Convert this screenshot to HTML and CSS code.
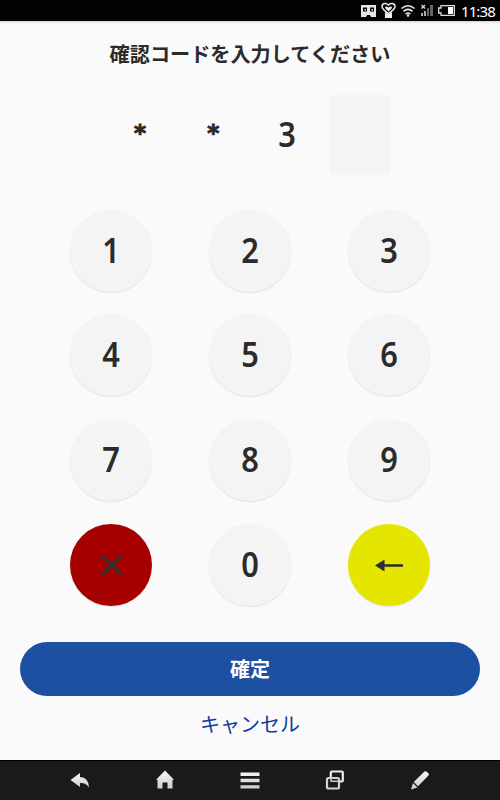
FILE: index.html
```html
<!DOCTYPE html>
<html lang="ja">
<head>
<meta charset="utf-8">
<title>確認コード</title>
<link rel="stylesheet" href="styles.css">
</head>
<body>
<div class="screen">
  <header class="status">
    <svg class="status-icons" width="98" height="21" viewBox="0 0 98 21">
      <path fill="#e6e6e6" fill-rule="evenodd" d="M1 5H16V17H11L10 15H7L6 17H1ZM3 7.500V11.500H7V7.500ZM10 7.500V11.500H14V7.500ZM4.500 9H6V10.500H4.500ZM11.500 9H13V10.500H11.500Z"/>
      <path fill="none" stroke="#eee" stroke-width="1.500" d="M28.500 13.500C24 10.500 22 8.500 22 6.500C22 3 26.500 2.500 28.500 5C30.500 2.500 35 3 35 6.500C35 8.500 33 10.500 28.500 13.500Z"/>
      <path fill="#eee" d="M28.500 11.500L25 8Q25 5.500 28.500 7.500Q32 5.500 32 8ZM25 12L28.500 14L32 12V18H25Z"/>
      <path fill="none" stroke="#e6e6e6" stroke-width="1.600" d="M41.500 8.500Q48 3 54.500 8.500M43.500 11.300Q48 7.500 52.500 11.300M45.500 14Q48 12 50.500 14"/>
      <circle cx="48" cy="15.500" r="1.300" fill="#eee"/>
      <path stroke="#ddd" stroke-width="1.300" d="M61.500 5L65 8.500M65 5L61.500 8.500"/>
      <path fill="#aaa" d="M61 13H63V16H61ZM64 11H66V16H64Z"/>
      <path fill="#666" d="M67 8H69V16H67ZM70 5H73V16H70Z"/>
      <path fill="none" stroke="#ddd" stroke-width="1.300" d="M81 5.700H94.300V15.300H81V13H78.700V8H81Z"/>
      <path fill="#fff" d="M88 7H93V14H88Z"/>
    </svg>
    <span class="clock">11:38</span>
  </header>
  <main class="content">
    <h1 class="title">確認コードを入力してください</h1>
    <div class="code">
      <div class="cell star">*</div>
      <div class="cell star">*</div>
      <div class="cell"><span class="digit">3</span></div>
      <div class="cell empty"></div>
    </div>
    <div class="keypad">
      <button class="key"><span class="digit">1</span></button>
      <button class="key"><span class="digit">2</span></button>
      <button class="key"><span class="digit">3</span></button>
      <button class="key"><span class="digit">4</span></button>
      <button class="key"><span class="digit">5</span></button>
      <button class="key"><span class="digit">6</span></button>
      <button class="key"><span class="digit">7</span></button>
      <button class="key"><span class="digit">8</span></button>
      <button class="key"><span class="digit">9</span></button>
      <button class="key clear" aria-label="クリア">
        <svg width="30" height="30" viewBox="0 0 30 30"><path stroke="#333" stroke-width="3.200" d="M6.200 6.200L25.300 24.600M25.300 6.200L6.200 24.600"/></svg>
      </button>
      <button class="key"><span class="digit">0</span></button>
      <button class="key back" aria-label="戻る">
        <svg width="30" height="30" viewBox="0 0 30 30"><path fill="#2d2d32" d="M1 15.500L10.500 9.500V14.200H29V16.800H10.500V21.500Z"/></svg>
      </button>
    </div>
    <button class="confirm">確定</button>
    <a class="cancel">キャンセル</a>
  </main>
  <nav class="navbar">
    <svg width="24" height="24" viewBox="0 0 24 24"><path fill="url(#metal)" d="M2.500 11L12 4V8Q20.500 8 21 18.500Q18 13.500 12 14V18Z"/></svg>
    <svg width="24" height="24" viewBox="0 0 24 24"><path fill="url(#metal)" d="M12 1.500L21 10.800H19.500V19.500H14.500V13.500H9.500V19.500H4.500V10.800H3Z"/></svg>
    <svg width="24" height="24" viewBox="0 0 24 24"><path fill="url(#metal)" d="M2.500 3.500H21.500V7H2.500ZM2.500 9.800H21.500V13.200H2.500ZM2.500 16.200H21.500V19.500H2.500Z"/></svg>
    <svg width="24" height="24" viewBox="0 0 24 24"><rect x="7.800" y="2.500" width="12" height="10" rx="1" fill="none" stroke="#eee" stroke-width="2.200"/><rect x="4" y="9" width="12" height="10.500" rx="1.500" fill="#1a1a1a" stroke="#d2d2d2" stroke-width="2.200"/><path fill="none" stroke="#ccc" stroke-width="1.500" d="M8 8V12.200H15"/></svg>
    <svg width="24" height="24" viewBox="0 0 24 24"><path fill="url(#metal)" d="M3 20.500L5 14L9.500 18.500ZM5.800 13L16.500 2.500Q17.500 1.800 18.500 2.500L20.500 4.500Q21.500 5.500 20.500 6.500L10 17.300Z"/>
      <defs><linearGradient id="metal" x1="0" y1="0" x2="0" y2="1"><stop offset="0" stop-color="#f5f5f5"/><stop offset="1" stop-color="#cdcdcd"/></linearGradient></defs>
    </svg>
  </nav>
</div>
</body>
</html>
```
FILE: styles.css
```css
* { box-sizing: border-box; }
body { margin: 0; }
button { border: 0; padding: 0; font: inherit; }
.screen {
  width: 500px;
  height: 800px;
  display: flex;
  flex-direction: column;
  background: #fafafa;
  color: #2b2b2b;
  font-family: "Noto Sans CJK JP", sans-serif;
}
.status {
  height: 21px;
  flex: none;
  display: flex;
  align-items: center;
  justify-content: flex-end;
  gap: 3px;
  padding-right: 5px;
  background: #030303;
  box-shadow: 0 1px 2px #ccc;
}
.clock {
  width: 34px;
  color: #fff;
  font: 15px/20px "Noto Sans", sans-serif;
  letter-spacing: -0.900px;
  white-space: nowrap;
}
.content {
  flex: 1;
  display: flex;
  flex-direction: column;
  align-items: center;
}
.title {
  margin: 18px 0 26px;
  font-size: 20.150px;
  line-height: 30px;
  font-weight: 700;
}
.code {
  display: grid;
  grid-template-columns: repeat(4, 60px);
  column-gap: 13.300px;
  height: 80px;
}
.cell {
  display: flex;
  align-items: center;
  justify-content: center;
}
.star {
  padding-bottom: 4px;
  font: 700 23px/40px "DejaVu Sans", sans-serif;
  -webkit-text-stroke: 1px #2b2b2b;
}
.empty { background: #f4f4f4; border-radius: 4px; }
.digit {
  padding-bottom: 2px;
  font: 600 35px/46px "Noto Sans", sans-serif;
  transform: scaleX(0.880);
}
.keypad {
  margin-top: 34.600px;
  display: grid;
  grid-template-columns: repeat(3, 82px);
  grid-auto-rows: 82px;
  gap: 22.900px 57px;
}
.key {
  display: flex;
  align-items: center;
  justify-content: center;
  border-radius: 50%;
  background: #f4f4f4;
  color: #2b2b2b;
  box-shadow: 0 1px 1.500px rgba(0, 0, 0, 0.100);
}
.clear { background: #a60000; }
.back { background: #e5e600; }
.confirm {
  width: 460px;
  height: 54px;
  margin-top: 35.700px;
  border-radius: 27px;
  background: #1e50a2;
  color: #fff;
  font-size: 20px;
  line-height: 53px;
  font-weight: 700;
}
.cancel {
  margin-top: 13.500px;
  color: #0d3ba0;
  font-size: 20px;
  line-height: 30px;
}
.navbar {
  height: 40px;
  flex: none;
  display: flex;
  align-items: center;
  justify-content: space-between;
  padding: 0 68px;
  border-top: 1px solid #000;
  background: #1a1a1a;
}
```
